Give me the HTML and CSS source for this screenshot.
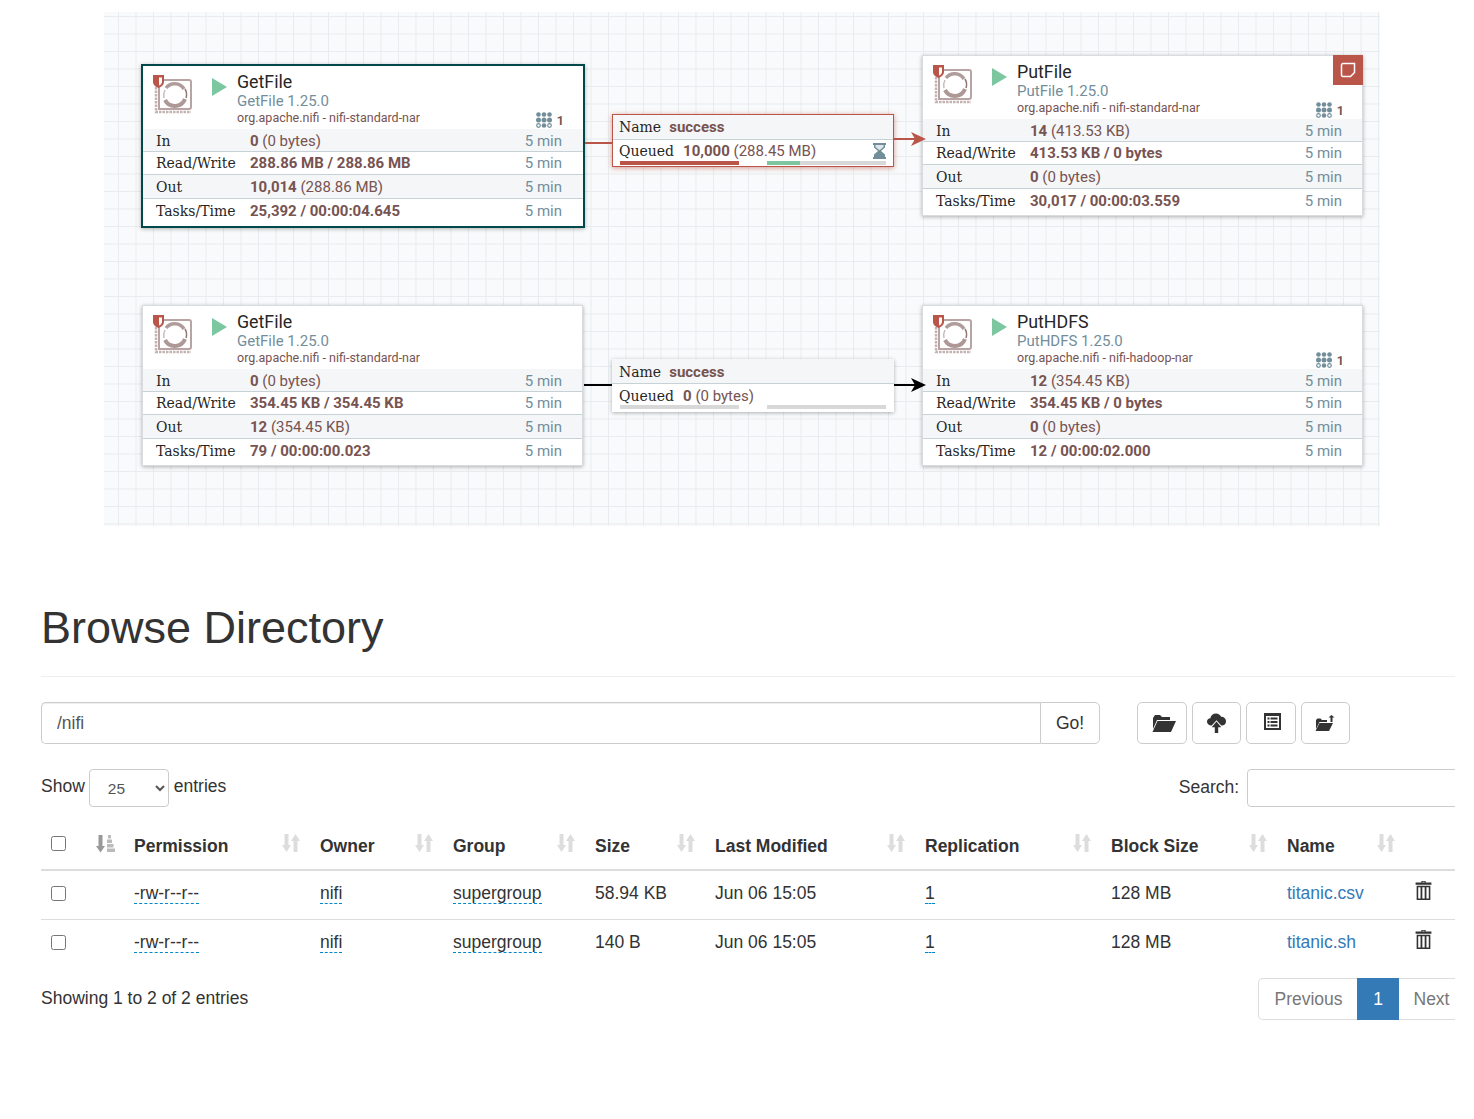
FILE: index.html
```html
<!DOCTYPE html>
<html lang="en">
<head>
  <meta charset="UTF-8" />
  <title>Browse Directory</title>
  <link rel="stylesheet" href="styles.css">
</head>
<body>
  <svg class="defs" width="0" height="0">
    <symbol id="chip" viewBox="0 0 40 40">
      <path d="M6 5H36a2 2 0 0 1 2 2V32a2 2 0 0 1-2 2H6Z" fill="none" stroke="#b7a4a3" stroke-width="2"/>
      <path d="M3 12V37H38" fill="none" stroke="#c3b3b2" stroke-width="2.500" stroke-dasharray="2.500 1"/>
      <path d="M13 13A11 11 0 0 1 31 14" fill="none" stroke="#b09c9b" stroke-width="3.500"/>
      <path d="M32 24A11 11 0 0 1 12 25" fill="none" stroke="#ad9896" stroke-width="4"/>
      <path d="M11 23A11 11 0 0 1 12 15" fill="none" stroke="#c9bbba" stroke-width="1.500"/>
      <path d="M32 14A11 11 0 0 1 33 23" fill="none" stroke="#8d7876" stroke-width="1.500"/>
      <path d="M0 0H11V7C11 10 8 12 5.500 13C3 12 0 10 0 7Z" fill="#ba554a"/>
      <path d="M6 2.500H9V7C9 8.500 7.500 10 6 10.500Z" fill="#fff"/>
    </symbol>
    <symbol id="bundle" viewBox="0 0 16 16">
      <g fill="#728e9b">
        <circle cx="2.500" cy="2.500" r="2.300"/><circle cx="8" cy="2.500" r="2.300"/><circle cx="13.500" cy="2.500" r="2.300"/>
        <circle cx="8" cy="8" r="2.500"/><circle cx="2.500" cy="8" r="2.500"/><circle cx="13.500" cy="8" r="2.500"/>
        <circle cx="8" cy="13.500" r="2.300"/>
      </g>
      <g fill="none" stroke="#728e9b" stroke-width="1.200">
        <circle cx="2.500" cy="13.500" r="1.800"/><circle cx="13.500" cy="13.500" r="1.800"/>
      </g>
    </symbol>
    <symbol id="sort" viewBox="0 0 18 18">
      <path d="M2.500 0H6.500V11H9L4.500 18L0 11H2.500Z" fill="currentColor"/>
      <path d="M11.500 18H15.500V7H18L13.500 0L9 7H11.500Z" fill="currentColor"/>
    </symbol>
    <symbol id="trash" viewBox="0 0 16 18">
      <path d="M6 0H10V1.500H15.500V3.500H.5V1.500H6ZM7 .8V1.500H9V.8Z" fill="#333" fill-rule="evenodd"/>
      <path d="M1.500 4.500H14.500V18H1.500ZM3 6V16.500H5.200V6ZM6.900 6V16.500H9.100V6ZM10.800 6V16.500H13V6Z" fill="#333" fill-rule="evenodd"/>
    </symbol>
  </svg>

  <div class="flow">
    <div class="proc proc-a selected">
      <div class="proc-head">
        <svg class="chip"><use href="#chip"/></svg>
        <span class="play"></span>
        <div class="proc-name">
          <div class="title">GetFile</div>
          <div class="ptype">GetFile 1.25.0</div>
          <div class="bundle">org.apache.nifi - nifi-standard-nar</div>
        </div>
        <div class="threads"><svg class="bundle-ic"><use href="#bundle"/></svg><b>1</b></div>
      </div>
      <div class="stat stat-in stripe"><span>In</span><span><b>0</b> (0 bytes)</span><em>5 min</em></div>
      <div class="stat"><span>Read/Write</span><span><b>288.86 MB / 288.86 MB</b></span><em>5 min</em></div>
      <div class="stat stat-out stripe"><span>Out</span><span><b>10,014</b> (288.86 MB)</span><em>5 min</em></div>
      <div class="stat stat-tasks"><span>Tasks/Time</span><span><b>25,392 / 00:00:04.645</b></span><em>5 min</em></div>
    </div>

    <div class="proc proc-b">
      <div class="proc-head">
        <svg class="chip"><use href="#chip"/></svg>
        <span class="play"></span>
        <div class="proc-name">
          <div class="title">PutFile</div>
          <div class="ptype">PutFile 1.25.0</div>
          <div class="bundle">org.apache.nifi - nifi-standard-nar</div>
        </div>
        <div class="threads"><svg class="bundle-ic"><use href="#bundle"/></svg><b>1</b></div>
      </div>
      <div class="stat stat-in stripe"><span>In</span><span><b>14</b> (413.53 KB)</span><em>5 min</em></div>
      <div class="stat"><span>Read/Write</span><span><b>413.53 KB / 0 bytes</b></span><em>5 min</em></div>
      <div class="stat stat-out stripe"><span>Out</span><span><b>0</b> (0 bytes)</span><em>5 min</em></div>
      <div class="stat stat-tasks"><span>Tasks/Time</span><span><b>30,017 / 00:00:03.559</b></span><em>5 min</em></div>
      <div class="note">
        <svg width="16" height="16" viewBox="0 0 16 16"><path d="M3 1.500H14.500V10.500L10.500 14.500H3A1.500 1.500 0 0 1 1.500 13V3A1.500 1.500 0 0 1 3 1.500Z" fill="none" stroke="#fff" stroke-width="1.500"/></svg>
      </div>
    </div>

    <div class="proc proc-c">
      <div class="proc-head">
        <svg class="chip"><use href="#chip"/></svg>
        <span class="play"></span>
        <div class="proc-name">
          <div class="title">GetFile</div>
          <div class="ptype">GetFile 1.25.0</div>
          <div class="bundle">org.apache.nifi - nifi-standard-nar</div>
        </div>
      </div>
      <div class="stat stat-in stripe"><span>In</span><span><b>0</b> (0 bytes)</span><em>5 min</em></div>
      <div class="stat"><span>Read/Write</span><span><b>354.45 KB / 354.45 KB</b></span><em>5 min</em></div>
      <div class="stat stat-out stripe"><span>Out</span><span><b>12</b> (354.45 KB)</span><em>5 min</em></div>
      <div class="stat stat-tasks"><span>Tasks/Time</span><span><b>79 / 00:00:00.023</b></span><em>5 min</em></div>
    </div>

    <div class="proc proc-d">
      <div class="proc-head">
        <svg class="chip"><use href="#chip"/></svg>
        <span class="play"></span>
        <div class="proc-name">
          <div class="title">PutHDFS</div>
          <div class="ptype">PutHDFS 1.25.0</div>
          <div class="bundle">org.apache.nifi - nifi-hadoop-nar</div>
        </div>
        <div class="threads"><svg class="bundle-ic"><use href="#bundle"/></svg><b>1</b></div>
      </div>
      <div class="stat stat-in stripe"><span>In</span><span><b>12</b> (354.45 KB)</span><em>5 min</em></div>
      <div class="stat"><span>Read/Write</span><span><b>354.45 KB / 0 bytes</b></span><em>5 min</em></div>
      <div class="stat stat-out stripe"><span>Out</span><span><b>0</b> (0 bytes)</span><em>5 min</em></div>
      <div class="stat stat-tasks"><span>Tasks/Time</span><span><b>12 / 00:00:02.000</b></span><em>5 min</em></div>
    </div>

    <svg class="wires" width="1276" height="514" viewBox="0 0 1276 514">
      <path d="M481 131H510M788 127H812" stroke="#ba554a" stroke-width="2" fill="none"/>
      <path d="M807 120L822 127L807 134L811 127Z" fill="#ba554a"/>
      <path d="M480 373H510M788 373H812" stroke="#000" stroke-width="2" fill="none"/>
      <path d="M807 366L822 373L807 380L811 373Z" fill="#000"/>
    </svg>

    <div class="conn conn-a alert">
      <div class="conn-name"><span>Name</span><b>success</b></div>
      <div class="conn-queue">
        <span>Queued</span><span><b>10,000</b> (288.45 MB)</span>
        <svg class="hourglass" width="13" height="16" viewBox="0 0 13 16"><path d="M0 0H13V2H12V4.500L8 8L12 11.500V14H13V16H0V14H1V11.500L5 8L1 4.500V2H0Z" fill="#728e9b"/><path d="M2.500 2H10.500V4L6.500 7.300L2.500 4Z" fill="#dfe6e9"/></svg>
      </div>
      <div class="bars">
        <div class="bar"><div class="fill red"></div></div>
        <div class="bar"><div class="fill green"></div></div>
      </div>
    </div>

    <div class="conn conn-b">
      <div class="conn-name"><span>Name</span><b>success</b></div>
      <div class="conn-queue"><span>Queued</span><span><b>0</b> (0 bytes)</span></div>
      <div class="bars">
        <div class="bar"></div>
        <div class="bar"></div>
      </div>
    </div>
  </div>

  <div class="browse">
    <h1>Browse Directory</h1>
    <hr>

    <div class="toolbar">
      <div class="path-group">
        <input class="path" type="text" value="/nifi">
        <button class="go">Go!</button>
      </div>
      <div class="tools">
        <button class="tool">
          <svg class="ic-folder" width="24" height="18" viewBox="0 0 24 18"><path d="M1 4L3 1H8L10 3H18V6H5L1 15Z" fill="#333"/><path d="M5.500 7H24L19 18H.5Z" fill="#333"/></svg>
        </button>
        <button class="tool">
          <svg width="19" height="20" viewBox="0 0 20 21"><path d="M5 13H4C1.500 13 0 11 0 9C0 7 1.500 5.500 3.500 5.500C4 2.500 6.500 .5 9.500 .5C12 .5 14 2 14.800 4C17.800 4 20 6 20 8.800C20 11.300 18 13 15.500 13H15L10 7.500Z" fill="#333"/><path d="M10 9L15 15H11.800V21H8.200V15H5Z" fill="#333"/></svg>
        </button>
        <button class="tool">
          <svg class="ic-list" width="17" height="17" viewBox="0 0 17 17"><path d="M0 0H17V17H0ZM2 3V15H15V3ZM3.500 4.500H5.500V6.500H3.500ZM6.500 4.500H13.500V6.500H6.500ZM3.500 8H5.500V10H3.500ZM6.500 8H13.500V10H6.500ZM3.500 11.500H5.500V13.500H3.500ZM6.500 11.500H13.500V13.500H6.500Z" fill="#333" fill-rule="evenodd"/></svg>
        </button>
        <button class="tool">
          <svg width="20" height="16" viewBox="0 0 20 16"><path d="M1 5L2.500 3.500H5.500L7 5H12V7H4.500L1 14Z" fill="#333"/><path d="M4.500 8H18L14 16H.5Z" fill="#333"/><path d="M15.500 7V2.500H13.500L16.500 0L19.500 2.500H17.500V7Z" fill="#333"/></svg>
        </button>
      </div>
    </div>

    <div class="filters">
      <label class="show"><span>Show</span>
        <select class="entries"><option>25</option></select>
        <span>entries</span></label>
      <label class="search">Search: <input type="text"></label>
    </div>

    <table class="files">
      <thead>
        <tr>
          <th class="c-check"><input type="checkbox"></th>
          <th class="c-order"><svg class="sorted" width="19" height="19" viewBox="0 0 19 19"><path d="M2.500 1H6.500V12H9L4.500 18.500L0 12H2.500Z" fill="#999"/><path d="M12 1H15V4.500H12ZM11 5.500H16V9H11ZM11 10H17.500V13.500H11ZM11 14.500H19V18H11Z" fill="#bbb"/></svg></th>
          <th class="c-perm"><div class="th">Permission<svg class="sort"><use href="#sort"/></svg></div></th>
          <th class="c-owner"><div class="th">Owner<svg class="sort"><use href="#sort"/></svg></div></th>
          <th class="c-group"><div class="th">Group<svg class="sort"><use href="#sort"/></svg></div></th>
          <th class="c-size"><div class="th">Size<svg class="sort"><use href="#sort"/></svg></div></th>
          <th class="c-mod"><div class="th">Last Modified<svg class="sort"><use href="#sort"/></svg></div></th>
          <th class="c-rep"><div class="th">Replication<svg class="sort"><use href="#sort"/></svg></div></th>
          <th class="c-block"><div class="th">Block Size<svg class="sort"><use href="#sort"/></svg></div></th>
          <th class="c-name"><div class="th">Name<svg class="sort"><use href="#sort"/></svg></div></th>
          <th class="c-del"></th>
        </tr>
      </thead>
      <tbody>
        <tr>
          <td><input type="checkbox"></td>
          <td></td>
          <td><span class="edit">-rw-r--r--</span></td>
          <td><span class="edit">nifi</span></td>
          <td><span class="edit">supergroup</span></td>
          <td>58.94 KB</td>
          <td>Jun 06 15:05</td>
          <td><span class="edit">1</span></td>
          <td>128 MB</td>
          <td><a href="#">titanic.csv</a></td>
          <td><svg class="del"><use href="#trash"/></svg></td>
        </tr>
        <tr>
          <td><input type="checkbox"></td>
          <td></td>
          <td><span class="edit">-rw-r--r--</span></td>
          <td><span class="edit">nifi</span></td>
          <td><span class="edit">supergroup</span></td>
          <td>140 B</td>
          <td>Jun 06 15:05</td>
          <td><span class="edit">1</span></td>
          <td>128 MB</td>
          <td><a href="#">titanic.sh</a></td>
          <td><svg class="del"><use href="#trash"/></svg></td>
        </tr>
      </tbody>
    </table>

    <div class="table-foot">
      <div class="info">Showing 1 to 2 of 2 entries</div>
      <div class="pager">
        <a href="#" class="prev">Previous</a>
        <a href="#" class="cur">1</a>
        <a href="#" class="next">Next</a>
      </div>
    </div>
  </div>
</body>
</html>
```

FILE: styles.css
```css
* {
  box-sizing: border-box;
}
html, body {
  margin: 0;
  background: #fff;
}
body {
  height: 1119px;
  overflow: hidden;
  font-family: "Liberation Sans", Arial, sans-serif;
  font-size: 17.5px;
  color: #333;
}
.defs {
  position: absolute;
}

/* flow canvas */
.flow {
  position: relative;
  width: 1276px;
  height: 514px;
  margin: 12px 0 0 104px;
  background-color: #f9fafb;
  background-image:
    linear-gradient(#e8ecee 1px, transparent 1px),
    linear-gradient(90deg, #e8ecee 1px, transparent 1px);
  background-size: 17.5px 17.5px;
  background-position: 14px 4px;
}
.wires {
  position: absolute;
  left: 0;
  top: 0;
  z-index: 2;
}
.proc {
  position: absolute;
  width: 441px;
  height: 161px;
  background: #fff;
  border: 1px solid #d8dcde;
  box-shadow: 0 1px 4px rgba(0,0,0,0.3);
  font-family: Roboto, sans-serif;
  font-size: 15px;
  color: #775351;
  z-index: 1;
}
.proc-a {
  left: 37px;
  top: 52px;
  width: 444px;
  height: 164px;
}
.proc-b { left: 818px; top: 43px; }
.proc-c { left: 38px; top: 293px; }
.proc-d { left: 818px; top: 293px; }
.selected {
  border: 2px solid #004849;
}
.proc-head {
  position: relative;
  display: flex;
  height: 63px;
  padding: 9px 0 0 10px;
}
.chip {
  width: 40px;
  height: 40px;
  flex: none;
}
.play {
  width: 0;
  height: 0;
  margin: 3px 10px 0 19px;
  border-left: 15px solid #7dc7a0;
  border-top: 9px solid transparent;
  border-bottom: 9px solid transparent;
  flex: none;
}
.proc-name {
  margin-top: -3px;
}
.title {
  font-size: 17.8px;
  line-height: 20px;
  color: #262626;
}
.ptype {
  font-size: 15px;
  line-height: 18px;
  color: #728e9b;
}
.bundle {
  font-size: 12.5px;
  line-height: 16px;
  color: #775351;
}
.threads {
  position: absolute;
  right: 18px;
  top: 46px;
  display: flex;
  align-items: center;
  gap: 5px;
  font-size: 12.5px;
}
.selected .threads {
  right: 19px;
}
.bundle-ic {
  width: 16px;
  height: 16px;
}
.stat {
  display: grid;
  grid-template-columns: 94px 1fr auto;
  align-items: center;
  height: 23px;
  padding: 0 20px 0 13px;
  border-bottom: 1px solid #c7d2d7;
}
.selected .stat {
  padding-right: 21px;
}
.stat-in {
  padding-top: 2px;
}
.stat-out {
  height: 24px;
}
.stat-tasks {
  height: 24px;
  border-bottom: none;
}
.stat.stripe {
  background: #f4f6f7;
}
.stat > span:first-child {
  font-family: "DejaVu Serif", serif;
  font-size: 14px;
  color: #262626;
}
.stat b {
  font-weight: 700;
}
.stat em {
  font-style: normal;
  color: #728e9b;
}
.note {
  position: absolute;
  top: -1px;
  right: -1px;
  width: 30px;
  height: 30px;
  display: flex;
  align-items: center;
  justify-content: center;
  background: #ba554a;
}

/* connection labels */
.conn {
  position: absolute;
  left: 508px;
  width: 282px;
  background: #fff;
  box-shadow: 0 1px 4px rgba(0,0,0,0.3);
  font-family: Roboto, sans-serif;
  font-size: 15px;
  color: #775351;
  z-index: 3;
}
.conn-a { top: 102px; height: 53px; }
.conn-b { top: 347px; height: 53px; }
.alert {
  border: 1px solid #ba554a;
  box-shadow: 0 1px 5px rgba(186,85,74,0.6);
}
.conn-name {
  display: flex;
  align-items: center;
  gap: 8px;
  height: 25px;
  padding: 1px 0 0 7px;
  background: #f4f6f7;
  border-bottom: 1px solid #c7d2d7;
}
.alert .conn-name { padding: 0 0 0 6px; }
.conn-name span,
.conn-queue > span:first-child {
  font-family: "DejaVu Serif", serif;
  font-size: 14px;
  color: #262626;
}
.conn-queue {
  position: relative;
  display: flex;
  align-items: center;
  gap: 9px;
  height: 21px;
  padding: 2px 0 0 7px;
}
.alert .conn-queue { padding: 0 0 0 6px; }
.hourglass {
  position: absolute;
  right: 7px;
  top: 3px;
}
.bars {
  display: flex;
  justify-content: space-between;
  padding: 0 8px;
}
.alert .bars { padding: 0 7px; }
.bar {
  width: 119px;
  height: 4px;
  background: #d8d8d8;
}
.fill {
  height: 100%;
}
.fill.red {
  background: #ba554a;
  width: 100%;
}
.fill.green {
  background: #7dc7a0;
  width: 28%;
}

/* directory browser */
.browse {
  width: 1414px;
  margin-left: 41px;
  overflow: hidden;
}
h1 {
  margin: 0;
  padding-top: 77px;
  font-size: 45px;
  line-height: 50px;
  font-weight: 400;
}
hr {
  margin: 23px 0 25px;
  border: 0;
  border-top: 1px solid #eee;
}
.toolbar {
  display: flex;
  height: 42px;
}
.path-group {
  display: flex;
  width: 1059px;
}
.path {
  flex: 1;
  height: 42px;
  padding: 0 15px;
  border: 1px solid #ccc;
  border-right: 0;
  border-radius: 5px 0 0 5px;
  font: inherit;
  color: #555;
  box-shadow: inset 0 1px 1px rgba(0,0,0,0.075);
}
.go {
  width: 60px;
  height: 42px;
  background: #fff;
  border: 1px solid #ccc;
  border-radius: 0 5px 5px 0;
  font: inherit;
  color: #333;
}
.tools {
  display: flex;
  gap: 5px;
  margin-left: 37px;
}
.tool {
  display: flex;
  align-items: center;
  justify-content: center;
  width: 49.5px;
  height: 42px;
  padding: 0;
  background: #fff;
  border: 1px solid #ccc;
  border-radius: 5px;
}
.ic-folder {
  margin-left: 4px;
}
.ic-list {
  margin: -4px 0 0 3px;
}
.filters {
  display: flex;
  justify-content: space-between;
  align-items: center;
  height: 38px;
  margin-top: 25px;
}
.show {
  display: flex;
  align-items: center;
  gap: 4px;
}
.show span {
  padding-bottom: 4px;
}
.entries {
  width: 80px;
  height: 38px;
  margin-right: 1px;
  padding: 0 14px;
  background: #fff;
  border: 1px solid #ccc;
  border-radius: 4px;
  font: inherit;
  font-size: 15.5px;
  color: #555;
}
.search {
  margin-right: -20px;
}
.search input {
  width: 228px;
  height: 38px;
  margin-left: 3px;
  border: 1px solid #ccc;
  border-radius: 4px;
  vertical-align: middle;
}
.files {
  width: 1414px;
  margin-top: 16px;
  border-collapse: collapse;
  table-layout: fixed;
}
.files th {
  height: 47px;
  padding: 0 10px;
  border-bottom: 2.500px solid #ddd;
  text-align: left;
  font-weight: 700;
}
.files td {
  height: 49px;
  padding: 0 10px 2px;
  border-bottom: 1px solid #ddd;
}
.files tbody tr:last-child td {
  border-bottom: none;
}
.files input[type=checkbox] {
  display: block;
  width: 15px;
  height: 15px;
  margin: 0;
}
.files th input[type=checkbox] {
  margin-top: -6px;
}
.c-check { width: 45px; }
.c-order { width: 38px; }
.c-perm { width: 186px; }
.c-owner { width: 133px; }
.c-group { width: 142px; }
.c-size { width: 120px; }
.c-mod { width: 210px; }
.c-rep { width: 186px; }
.c-block { width: 176px; }
.c-name { width: 128px; }
.c-del { width: 50px; }
.th {
  display: flex;
  justify-content: space-between;
  align-items: center;
}
.sort {
  width: 18px;
  height: 18px;
  margin-top: -6px;
  color: #ddd;
  flex: none;
}
.sorted {
  display: block;
  margin: -6px 0 0 0;
}
.edit {
  border-bottom: 1px dashed #08c;
}
.files a {
  color: #337ab7;
  text-decoration: none;
}
.del {
  display: block;
  width: 17px;
  height: 19px;
  margin-top: -6px;
}
.table-foot {
  display: flex;
  justify-content: space-between;
  margin-top: 10px;
}
.info {
  padding-top: 10px;
}
.pager {
  display: flex;
  height: 42px;
  margin-right: -10px;
}
.pager a {
  display: flex;
  align-items: center;
  justify-content: center;
  height: 42px;
  border: 1px solid #ddd;
  text-decoration: none;
  color: #777;
}
.prev {
  width: 99px;
  padding-left: 1px;
  border-radius: 5px 0 0 5px;
  border-right: 0 !important;
}
.pager .cur {
  width: 42px;
  background: #337ab7;
  border-color: #337ab7;
  color: #fff;
}
.next {
  width: 66px;
  border-left: 0 !important;
}
```
